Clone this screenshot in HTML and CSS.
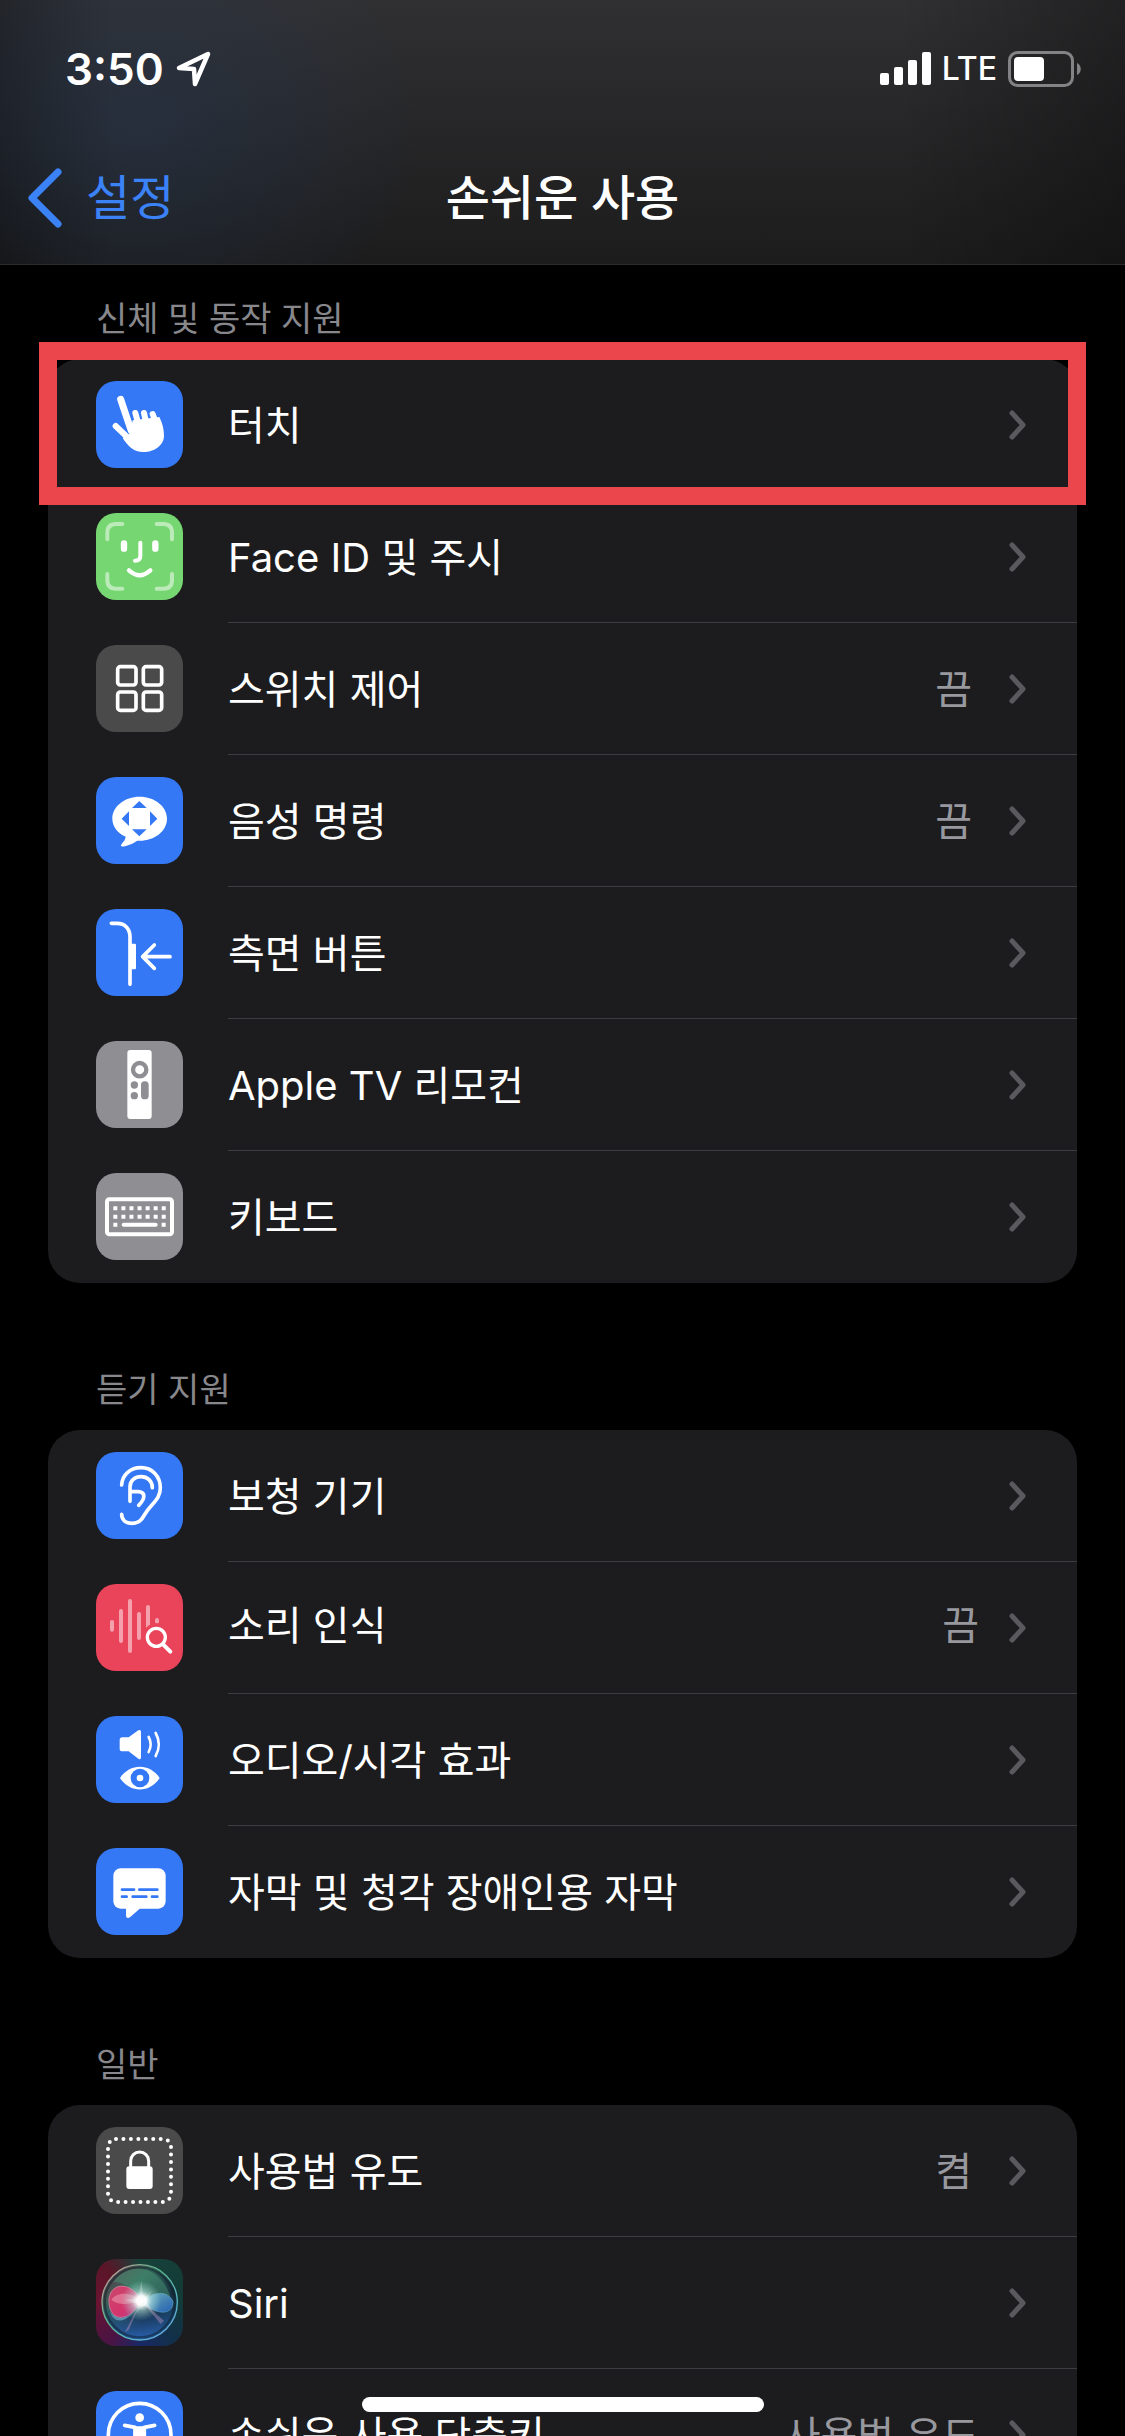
FILE: index.html
```html
<!DOCTYPE html>
<html lang="ko">
<head>
<meta charset="utf-8">
<meta name="viewport" content="width=device-width, initial-scale=1">
<title>손쉬운 사용</title>
<link rel="stylesheet" href="styles.css">
</head>
<body>
<svg class="defs" aria-hidden="true">
  <symbol id="chevron" viewBox="0 0 17 30"><path d="M3 3 14 15 3 27" fill="none" stroke="currentColor" stroke-width="5" stroke-linecap="round" stroke-linejoin="round"/></symbol>
</svg>
<div class="screen">
  <header class="top">
    <div class="status">
      <div class="status-side">
        <span class="time">3:50</span>
        <svg class="location" viewBox="0 0 36 36" aria-hidden="true"><path d="M3 17 32 3 19 33 18 18Z" fill="none" stroke="#fff" stroke-width="4.500" stroke-linejoin="round"/></svg>
      </div>
      <div class="status-side">
        <svg class="signal" viewBox="0 0 51 34" aria-hidden="true"><g fill="#fff"><rect y="21" width="9" height="12" rx="2"/><rect x="14" y="15" width="9" height="18" rx="2"/><rect x="28" y="8" width="9" height="25" rx="2"/><rect x="42" width="9" height="33" rx="2"/></g></svg>
        <span class="carrier">LTE</span>
        <svg class="battery" viewBox="0 0 74 36" aria-hidden="true"><rect x="1.500" y="1.500" width="63" height="33" rx="8" fill="none" stroke="#838385" stroke-width="3"/><rect x="6" y="6" width="30" height="24" rx="4" fill="#fff"/><path d="M69 12c5 2 5 10 0 12z" fill="#838385"/></svg>
      </div>
    </div>
    <nav class="nav">
      <a class="back" href="#"><svg class="back-icon" viewBox="0 0 34 60" aria-hidden="true"><path d="M30 4 4 30 30 56" fill="none" stroke="currentColor" stroke-width="7" stroke-linecap="round" stroke-linejoin="round"/></svg>설정</a>
      <h1 class="title">손쉬운 사용</h1>
    </nav>
  </header>

  <main class="content">
    <section class="section">
      <h2 class="heading">신체 및 동작 지원</h2>
      <ul class="group">
        <li class="item item-marked"><a class="row" href="#">
          <svg class="icon blue" viewBox="18 18 261 261" aria-hidden="true"><g fill="none" stroke="#fff" stroke-linecap="round"><path d="M92 73 124 168" stroke-width="21"/><path d="M77 153 122 196" stroke-width="18"/><path d="M136 114 146 150M162 114 170 150M188 117 200 150" stroke-width="18"/></g><path d="M120 180 128 136 208 126C218 145 222 165 222 182 222 210 193 231 160 231 130 231 114 213 98 189L119 176Z" fill="#fff"/></svg>
          <span class="cell"><span class="label">터치</span><svg class="chevron"><use href="#chevron"/></svg></span>
        </a></li>
        <li class="item"><a class="row" href="#">
          <svg class="icon green" viewBox="198 549 261 261" aria-hidden="true"><g fill="none" stroke="#fff" stroke-width="12" stroke-linecap="round"><path opacity=".5" d="M232 628V608Q232 582 258 582H277M380 582H400Q426 582 426 608V628M232 732V750Q232 776 258 776H277M380 776H400Q426 776 426 750V732"/><path d="M331 638V678Q331 692 315 692"/><path d="M297 721Q329 750 361 721" stroke-width="13"/><path d="M282 640V656M376 640V656" stroke-width="19"/></g></svg>
          <span class="cell"><span class="label">Face ID 및 주시</span><svg class="chevron"><use href="#chevron"/></svg></span>
        </a></li>
        <li class="item"><a class="row" href="#">
          <svg class="icon dark" viewBox="198 945 261 261" aria-hidden="true"><g fill="none" stroke="#fff" stroke-width="11"><rect x="263" y="1010" width="55" height="55" rx="8"/><rect x="340" y="1010" width="55" height="55" rx="8"/><rect x="263" y="1086" width="55" height="55" rx="8"/><rect x="340" y="1086" width="55" height="55" rx="8"/></g></svg>
          <span class="cell"><span class="label">스위치 제어</span><span class="value">끔</span><svg class="chevron"><use href="#chevron"/></svg></span>
        </a></li>
        <li class="item"><a class="row" href="#">
          <svg class="icon blue" viewBox="0 0 261 261" aria-hidden="true"><path d="M131 59c45 0 82 29 82 66s-37 66-82 66h-7c-15 10-38 19-48 17-6-5 12-14 13-29C64 168 49 148 49 125c0-37 37-66 82-66Z" fill="#fff"/><path d="M130 72 152 93H108ZM130 178 152 157H108ZM77 125 99 103V147ZM184 125 162 103V147Z" fill="#3478f6"/></svg>
          <span class="cell"><span class="label">음성 명령</span><span class="value">끔</span><svg class="chevron"><use href="#chevron"/></svg></span>
        </a></li>
        <li class="item"><a class="row" href="#">
          <svg class="icon blue" viewBox="0 0 261 261" aria-hidden="true"><g fill="none" stroke="#fff" stroke-width="11" stroke-linecap="round" stroke-linejoin="round"><path d="M46 43H63C88 43 102 60 102 84V226"/><path d="M222 143H140L175 108M140 143 175 178"/></g><rect x="102" y="104" width="18" height="77" rx="4" fill="#fff"/></svg>
          <span class="cell"><span class="label">측면 버튼</span><svg class="chevron"><use href="#chevron"/></svg></span>
        </a></li>
        <li class="item"><a class="row" href="#">
          <svg class="icon gray" viewBox="0 0 261 261" aria-hidden="true"><rect x="94" y="27" width="73" height="207" rx="9" fill="#fff"/><circle cx="131" cy="86" r="20" fill="none" stroke="#8e8e93" stroke-width="13"/><g fill="#8e8e93"><circle cx="115" cy="132" r="11"/><circle cx="115" cy="164" r="11"/><rect x="135" y="121" width="23" height="54" rx="11"/></g></svg>
          <span class="cell"><span class="label">Apple TV 리모컨</span><svg class="chevron"><use href="#chevron"/></svg></span>
        </a></li>
        <li class="item"><a class="row" href="#">
          <svg class="icon gray" viewBox="0 0 261 261" aria-hidden="true"><rect x="33" y="79" width="195" height="105" rx="7" fill="none" stroke="#fff" stroke-width="12"/><g fill="none" stroke="#fff" stroke-width="12"><path d="M52 106H210M52 131H210" stroke-dasharray="12 12.200"/><path d="M52 155H64M197 155H209"/><path d="M83 155H179" stroke-linecap="round"/></g></svg>
          <span class="cell"><span class="label">키보드</span><svg class="chevron"><use href="#chevron"/></svg></span>
        </a></li>
      </ul>
    </section>

    <section class="section">
      <h2 class="heading">듣기 지원</h2>
      <ul class="group">
        <li class="item"><a class="row" href="#">
          <svg class="icon blue" viewBox="18 21 261 261" aria-hidden="true"><g fill="none" stroke="#fff" stroke-width="11" stroke-linecap="round" stroke-linejoin="round"><path d="M95 120C97 88 122 68 153 68 187 68 211 94 211 128 211 165 184 175 165 207 155 225 147 235 126 235 107 235 95 224 95 208"/><path d="M120 169V125C120 107 135 95 153 95 172 95 187 108 187 128M120 140H146C168 142 165 163 146 181"/></g></svg>
          <span class="cell"><span class="label">보청 기기</span><svg class="chevron"><use href="#chevron"/></svg></span>
        </a></li>
        <li class="item"><a class="row row-raised" href="#">
          <svg class="icon red" viewBox="18 417 261 261" aria-hidden="true"><g fill="none" stroke-width="12" stroke-linecap="round"><path stroke="#f5a1ad" d="M66 531V554M93 498V588M120 468V618M147 507V579M174 486V545M201 525V530"/></g><circle cx="199" cy="577" r="42" fill="#e9445a"/><g fill="none" stroke="#fff" stroke-width="10" stroke-linecap="round"><circle cx="199" cy="577" r="27"/><path d="M220 599 241 620" stroke-width="12"/></g></svg>
          <span class="cell"><span class="label">소리 인식</span><span class="value value-near">끔</span><svg class="chevron"><use href="#chevron"/></svg></span>
        </a></li>
        <li class="item"><a class="row" href="#">
          <svg class="icon blue" viewBox="18 813 261 261" aria-hidden="true"><path d="M97 877H116L145 856Q153 852 153 862V936Q153 946 145 941L116 919H97Q89 919 89 911V885Q89 877 97 877Z" fill="#fff"/><path d="M176 876Q188 898 176 921M197 864Q216 898 197 933" fill="none" stroke="#fff" stroke-width="8" stroke-linecap="round"/><path d="M90 999C120 954 179 954 209 999 179 1045 120 1045 90 999Z" fill="#fff"/><circle cx="150" cy="999" r="28" fill="#3478f6"/><circle cx="150" cy="999" r="10" fill="#fff"/></svg>
          <span class="cell"><span class="label">오디오/시각 효과</span><svg class="chevron"><use href="#chevron"/></svg></span>
        </a></li>
        <li class="item"><a class="row" href="#">
          <svg class="icon blue" viewBox="0 0 261 261" aria-hidden="true"><rect x="52" y="61" width="157" height="121" rx="22" fill="#fff"/><path d="M90 175V204Q92 215 103 207L136 178Z" fill="#fff"/><path d="M78 125H114M130 125H184M78 146H92M110 146H151M168 146H184" fill="none" stroke="#3478f6" stroke-width="8" stroke-linecap="round"/></svg>
          <span class="cell"><span class="label">자막 및 청각 장애인용 자막</span><svg class="chevron"><use href="#chevron"/></svg></span>
        </a></li>
      </ul>
    </section>

    <section class="section">
      <h2 class="heading">일반</h2>
      <ul class="group">
        <li class="item"><a class="row" href="#">
          <svg class="icon dark" viewBox="0 0 261 261" aria-hidden="true"><rect x="36" y="36" width="189" height="189" rx="24" fill="none" stroke="#fff" stroke-width="12" stroke-linecap="round" stroke-dasharray="0 22.340"/><rect x="91" y="118" width="79" height="68" rx="9" fill="#fff"/><path d="M104 122V102A27 27 0 0 1 158 102V122" fill="none" stroke="#fff" stroke-width="9"/></svg>
          <span class="cell"><span class="label">사용법 유도</span><span class="value">켬</span><svg class="chevron"><use href="#chevron"/></svg></span>
        </a></li>
        <li class="item"><a class="row" href="#">
          <svg class="icon siri" viewBox="18 27 261 261" aria-hidden="true">
            <defs>
              <radialGradient id="glow"><stop offset="0" stop-color="#fff"/><stop offset=".25" stop-color="#fff" stop-opacity=".95"/><stop offset=".5" stop-color="#c8f0e8" stop-opacity=".5"/><stop offset="1" stop-color="#9fe0d8" stop-opacity="0"/></radialGradient>
              <linearGradient id="orb" x1="0" y1="0" x2="1" y2="1"><stop offset="0" stop-color="#6b2f45"/><stop offset=".35" stop-color="#34675a"/><stop offset=".65" stop-color="#16303f"/><stop offset="1" stop-color="#1c5680"/></linearGradient>
              <linearGradient id="orb-low" x1="0" y1="0" x2="0" y2="1"><stop offset=".5" stop-color="#183d78" stop-opacity="0"/><stop offset="1" stop-color="#2c64b4"/></linearGradient>
              <linearGradient id="rim" x1="0" y1="0" x2="1" y2="1"><stop offset="0" stop-color="#d99aa0"/><stop offset=".4" stop-color="#5fb58c"/><stop offset=".7" stop-color="#59b8c0"/><stop offset="1" stop-color="#6b9fe8"/></linearGradient>
              <linearGradient id="pink" x1="0" y1="0" x2="1" y2="1"><stop offset="0" stop-color="#c8496b"/><stop offset=".6" stop-color="#d5346d"/><stop offset="1" stop-color="#9a4c97"/></linearGradient>
              <linearGradient id="azure" x1="0" y1="0" x2="1" y2="1"><stop offset="0" stop-color="#8ad6da"/><stop offset="1" stop-color="#2568c9"/></linearGradient>
            </defs>
            <circle cx="149" cy="157" r="113" fill="url(#orb)"/>
            <circle cx="149" cy="157" r="113" fill="url(#orb-low)"/>
            <circle cx="149" cy="157" r="113" fill="none" stroke="url(#rim)" stroke-width="4"/>
            <circle cx="149" cy="157" r="105" fill="none" stroke="#0c1c24" stroke-width="7" opacity=".5"/>
            <path d="M70 95C110 40 185 45 222 100 240 125 240 140 240 140 200 120 170 140 154 152 125 105 95 98 70 95Z" fill="#4c9b79" opacity=".45"/>
            <path d="M154 152C125 95 65 95 57 145 52 215 115 225 154 152Z" fill="url(#pink)" stroke="#df91ad" stroke-width="2"/>
            <path d="M154 152C115 120 75 130 64 150 90 170 125 160 154 152Z" fill="#f0a5b8" opacity=".5"/>
            <path d="M60 185C75 230 120 215 154 155 130 205 85 218 60 185Z" fill="#73a8c4" opacity=".7"/>
            <path d="M154 152C190 125 235 120 249 155 250 195 200 200 154 152Z" fill="url(#azure)" opacity=".8" stroke="#71bddb" stroke-width="2"/>
            <path d="M154 152 212 222 222 212ZM154 152 105 246 116 240Z" fill="#b991bd" opacity=".45"/>
            <circle cx="154" cy="152" r="60" fill="url(#glow)"/>
            <path d="M154 92 161 144 186 122 168 152 188 182 158 166 140 190 146 162 104 150 145 144Z" fill="#fff" opacity=".25"/>
          </svg>
          <span class="cell"><span class="label">Siri</span><svg class="chevron"><use href="#chevron"/></svg></span>
        </a></li>
        <li class="item"><a class="row" href="#">
          <svg class="icon blue" viewBox="0 0 261 261" aria-hidden="true"><circle cx="131" cy="131" r="94" fill="none" stroke="#fff" stroke-width="11"/><circle cx="131" cy="80" r="13" fill="#fff"/><path d="M86 103 117 109V140L101 188M176 103 145 109V140L161 188" fill="none" stroke="#fff" stroke-width="11" stroke-linecap="round" stroke-linejoin="round"/><path d="M113 106H149V148H113Z" fill="#fff"/></svg>
          <span class="cell"><span class="label">손쉬운 사용 단축키</span><span class="value value-near">사용법 유도</span><svg class="chevron"><use href="#chevron"/></svg></span>
        </a></li>
      </ul>
    </section>
  </main>
  <div class="home-indicator"></div>
</div>
</body>
</html>
```
FILE: styles.css
```css
* {
  box-sizing: border-box;
}

body {
  margin: 0;
  background: #000;
  color: #fff;
  font-family: Inter, "Noto Sans CJK KR", sans-serif;
  font-size: 40px;
  line-height: 52px;
}

a {
  color: inherit;
  text-decoration: none;
}

.defs {
  position: absolute;
  width: 0;
  height: 0;
}

.screen {
  position: relative;
  display: flex;
  flex-direction: column;
  height: 100vh;
  overflow: hidden;
}

.top {
  flex: none;
  border-bottom: 1px solid #2c2c2e;
  background:
    radial-gradient(ellipse 280px 230px at 140px 120px, rgba(38, 60, 92, 0.4), rgba(38, 60, 92, 0)),
    linear-gradient(90deg, rgba(0, 0, 0, 0.3), rgba(0, 0, 0, 0) 10%, rgba(0, 0, 0, 0) 80%, rgba(0, 0, 0, 0.3)),
    linear-gradient(#303032, #1c1c1d);
}

.status {
  display: flex;
  justify-content: space-between;
  padding: 40px 43px 0 65px;
  height: 132px;
}

.status-side {
  display: flex;
  align-items: center;
  height: 58px;
}

.time {
  font-size: 44px;
  font-weight: 600;
}

.location {
  width: 36px;
  height: 36px;
  margin-left: 12px;
}

.signal {
  width: 51px;
  height: 34px;
}

.carrier {
  margin: 0 11px;
  font-size: 32px;
  font-weight: 500;
}

.battery {
  width: 74px;
  height: 36px;
}

.nav {
  display: grid;
  grid-template-columns: 1fr auto 1fr;
  align-items: center;
  height: 132px;
  padding: 0 28px;
  font-size: 48px;
}

.back {
  display: flex;
  align-items: center;
  gap: 24px;
  color: #3b82f7;
}

.back-icon {
  width: 34px;
  height: 60px;
}

.title {
  margin: 0;
  font-size: 48px;
  font-weight: 500;
}

.content {
  flex: 1;
  min-height: 0;
  overflow: hidden auto;
  scrollbar-width: none;
  padding: 28px 48px;
}

.section + .section {
  margin-top: 81px;
}

.heading {
  margin: 0 0 14px 48px;
  color: #87878c;
  font-size: 34px;
  font-weight: 400;
}

.group {
  margin: 0;
  padding: 0;
  list-style: none;
  border-radius: 32px;
  background: #1c1c1e;
}

.item-marked {
  position: relative;
}

.item-marked::after {
  content: "";
  position: absolute;
  inset: -17px -9px -14px;
  border: 18px solid #ea464b;
  pointer-events: none;
}

.row {
  display: flex;
  align-items: center;
  gap: 45px;
  padding-left: 48px;
}

.icon {
  flex: none;
  width: 87px;
  height: 87px;
  margin-bottom: 1px;
  border-radius: 20px;
}

.blue { background: #3478f6; }
.green { background: #76d672; }
.dark { background: #4a4a4b; }
.gray { background: #8e8e93; }
.red { background: #e9445a; }

.siri {
  background: conic-gradient(#17423a, #123a36 25%, #12304a 38%, #1a2866 50%, #4a1444 60%, #6a1330 75%, #5a1628 88%, #17423a);
}

.cell {
  display: flex;
  flex: 1;
  align-items: center;
  height: 132px;
  padding-right: 51px;
  border-bottom: 1px solid #3d3d41;
}

.item:last-child .cell {
  border-bottom-color: transparent;
}

.label,
.value {
  padding-top: 2px;
}

.label {
  flex: 1;
}

.value {
  margin-right: 37px;
  color: #98989f;
}

.value-near {
  margin-right: 30px;
}

.chevron {
  width: 17px;
  height: 30px;
  color: #5a5a5e;
}

.row-raised .label,
.row-raised .value {
  padding: 0 0 4px;
}

.home-indicator {
  position: absolute;
  bottom: 24px;
  left: 50%;
  width: 402px;
  height: 15px;
  margin-left: -201px;
  border-radius: 8px;
  background: #fff;
}
```
